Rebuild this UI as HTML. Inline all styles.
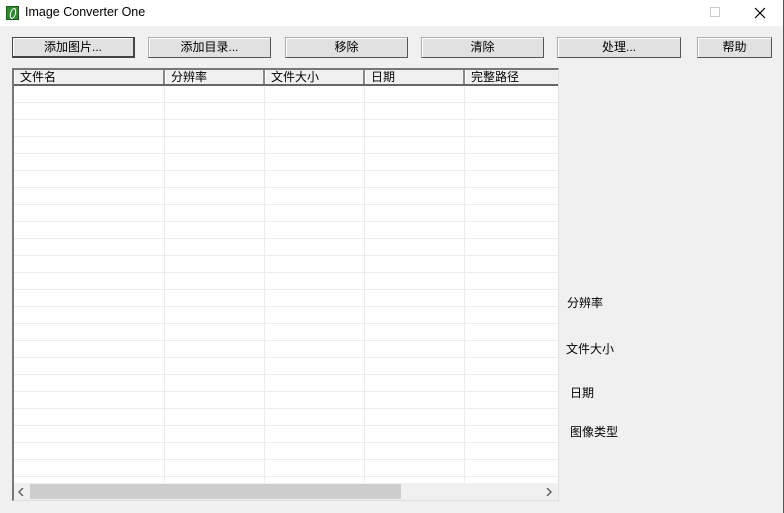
<!DOCTYPE html>
<html><head><meta charset="utf-8"><style>
*{margin:0;padding:0;box-sizing:border-box}
body{width:784px;height:513px;background:#f0f0f0;position:relative;overflow:hidden;font-family:"Liberation Sans","Noto Sans CJK SC",sans-serif;font-size:12px;color:#000}
.title{position:absolute;left:0;top:0;width:783px;height:26px;background:#fff}
.title .t{position:absolute;left:25px;top:5px;font-size:12.5px}
.icon{position:absolute;left:6px;top:6px;width:13px;height:14px;background:#2f8a2f;border:1px solid #1c5a1c}
.icon:after{content:"";position:absolute;left:3px;top:1px;width:4px;height:9px;border:1.5px solid #fff;border-radius:50%;transform:skew(-12deg)}
.rb{position:absolute;right:0;top:0;width:1px;height:513px;background:#555}
.btn{position:absolute;top:37px;height:21px;background:#e1e1e1;border:1px solid #adadad;border-right-color:#555;border-bottom-color:#555;text-align:center;line-height:19px;font-size:12px;box-shadow:inset 1px 1px 0 #fff}
.btn.d{border:1px solid #444;border-right:2px solid #444;border-bottom:2px solid #444}
.list{position:absolute;left:12px;top:68px;width:547px;height:433px;background:#fff;border-left:2px solid #777;border-top:2px solid #777;border-right:1px solid #e0e0e0;border-bottom:1px solid #e0e0e0;overflow:hidden}
.rows{position:absolute;left:0;top:16px;width:100%;height:398px;background:repeating-linear-gradient(to bottom,transparent 0 19px,#ececec 19px 20px,transparent 20px 37px);}
.rows2{position:absolute;left:0;top:0;width:100%;height:414px;background:repeating-linear-gradient(to bottom,transparent 0 35px,#ececec 35px 36px,transparent 36px 36px)}
.hdr{position:absolute;left:0;top:0;height:16px;width:100%;background:#f0f0f0;border-bottom:2px solid #666}
.h{position:absolute;top:0;height:14px;line-height:15px;padding-left:5px;border-right:2px solid #888;border-left:1px solid #fff}
.vl{position:absolute;top:16px;width:1px;height:398px;background:#ececec}
.sb{position:absolute;left:0;bottom:0;width:100%;height:17px;background:#f0f0f0}
.th{position:absolute;left:16px;top:1px;width:371px;height:15px;background:#cdcdcd}
.lbl{position:absolute;font-size:12px}
</style></head><body>
<div class="title"><div class="icon"></div><div class="t">Image Converter One</div>
<div style="position:absolute;left:710px;top:7px;width:10px;height:10px;border:1px solid #ccc"></div>
<svg style="position:absolute;left:754px;top:7px" width="12" height="12"><path d="M1 1L11 11M11 1L1 11" stroke="#000" stroke-width="1.2"/></svg>
</div>
<div class="rb"></div>
<div class="btn d" style="left:12px;width:123px">添加图片...</div>
<div class="btn" style="left:148px;width:123px">添加目录...</div>
<div class="btn" style="left:285px;width:123px">移除</div>
<div class="btn" style="left:421px;width:123px">清除</div>
<div class="btn" style="left:557px;width:124px">处理...</div>
<div class="btn" style="left:697px;width:75px">帮助</div>
<div class="list">
<div style="position:absolute;left:0;top:16px;width:100%;height:398px;background:repeating-linear-gradient(to bottom,transparent 0 16px,#ececec 16px 17px)"></div>
<div class="vl" style="left:150px"></div><div class="vl" style="left:250px"></div><div class="vl" style="left:350px"></div><div class="vl" style="left:450px"></div>
<div class="hdr">
<div class="h" style="left:0;width:151px">文件名</div>
<div class="h" style="left:151px;width:100px">分辨率</div>
<div class="h" style="left:251px;width:100px">文件大小</div>
<div class="h" style="left:351px;width:100px">日期</div>
<div class="h" style="left:451px;width:100px;border-right:none">完整路径</div>
</div>
<div class="sb"><div class="th"></div>
<svg style="position:absolute;left:4px;top:5px" width="6" height="8"><path d="M5 0L1 4L5 8" stroke="#606060" stroke-width="1.5" fill="none"/></svg>
<svg style="position:absolute;left:532px;top:5px" width="6" height="8"><path d="M1 0L5 4L1 8" stroke="#606060" stroke-width="1.5" fill="none"/></svg>
</div>
</div>
<div class="lbl" style="left:567px;top:294px">分辨率</div>
<div class="lbl" style="left:566px;top:340px">文件大小</div>
<div class="lbl" style="left:570px;top:384px">日期</div>
<div class="lbl" style="left:570px;top:423px">图像类型</div>
</body></html>
